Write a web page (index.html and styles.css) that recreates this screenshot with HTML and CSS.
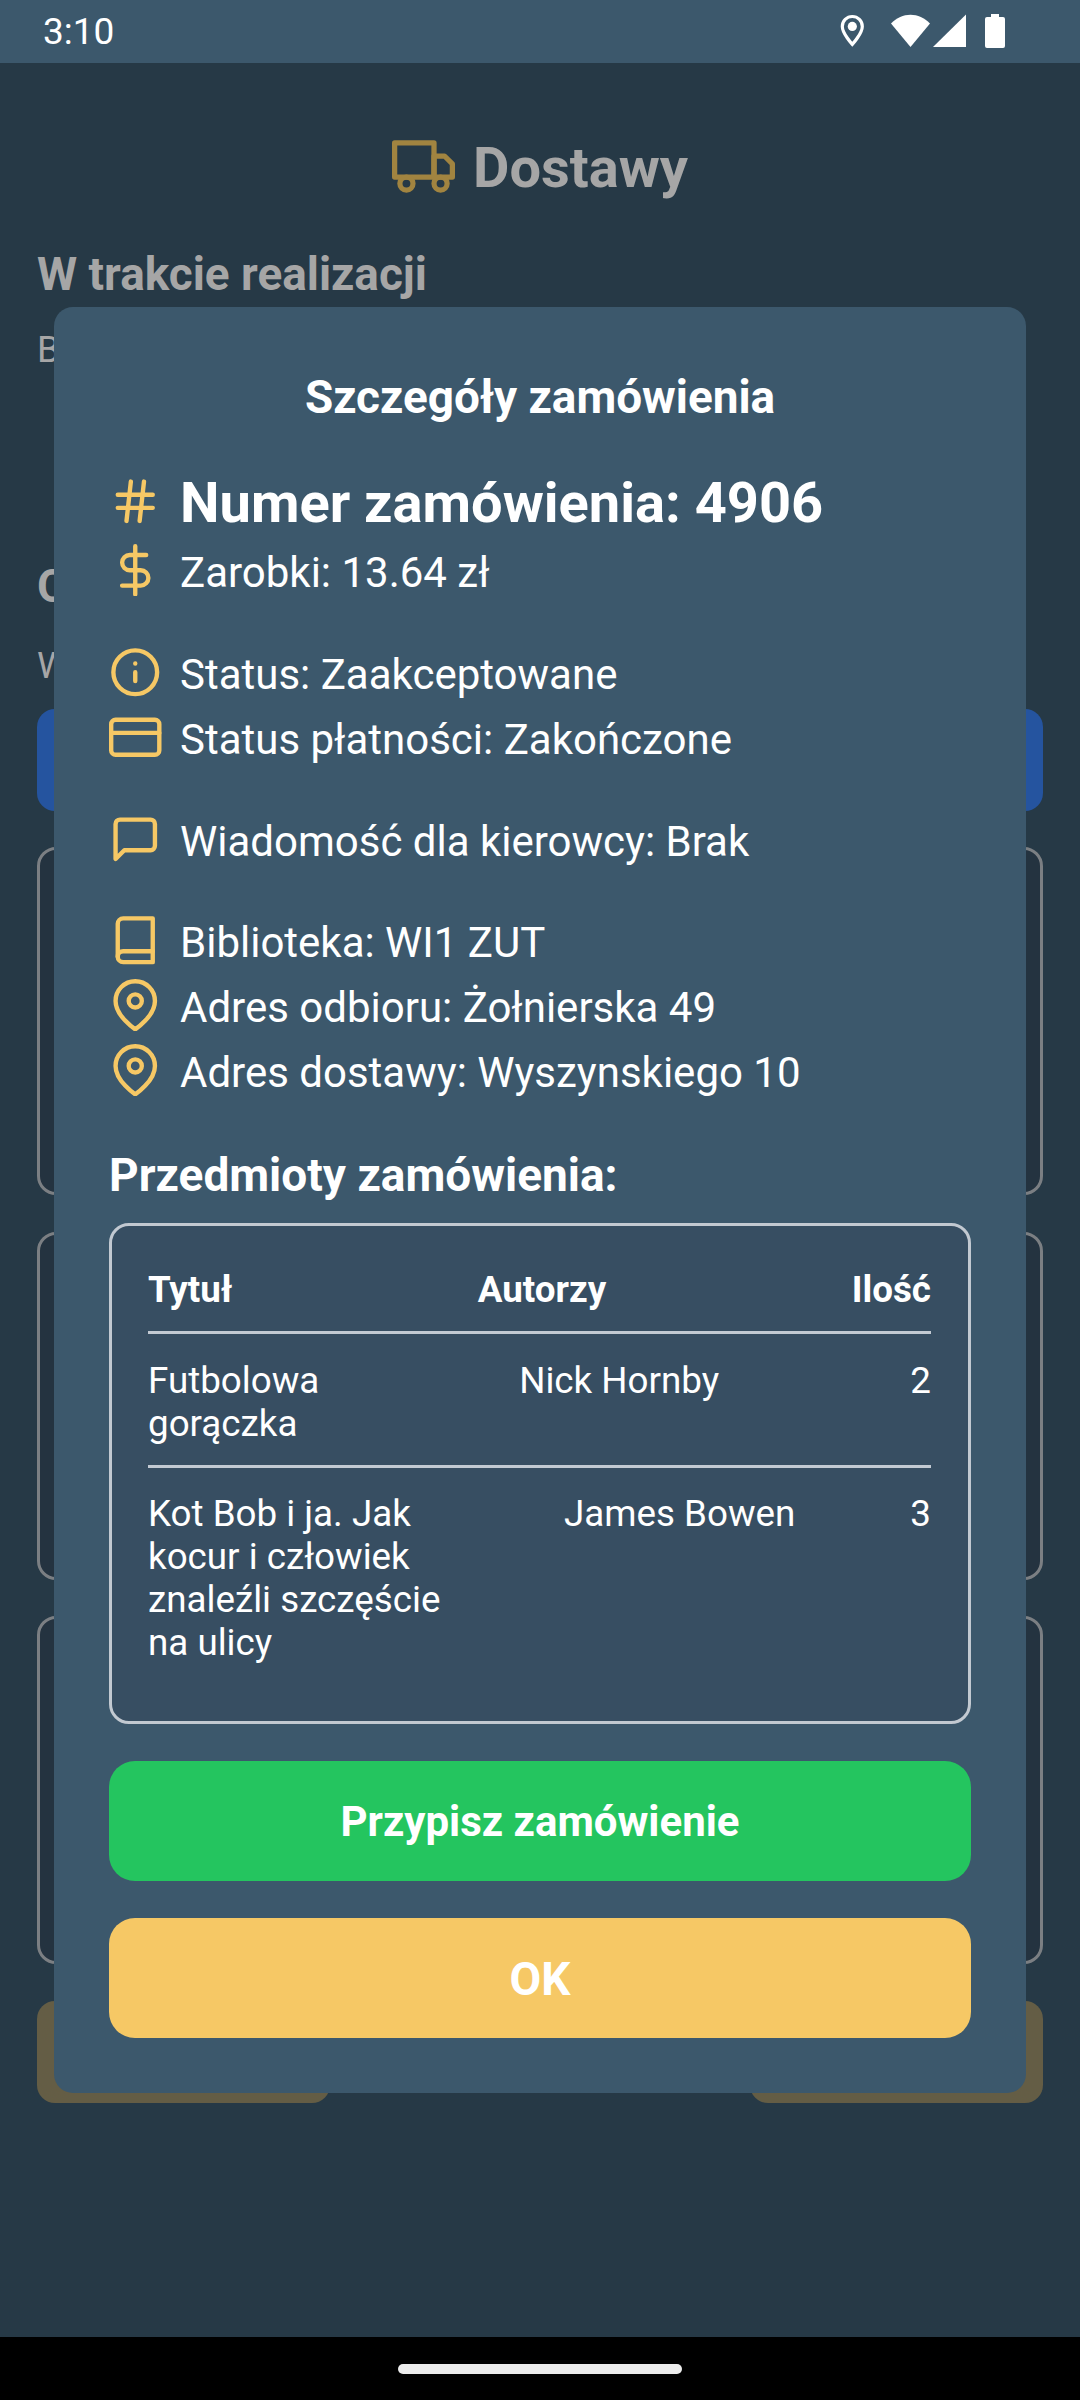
FILE: index.html
```html
<!DOCTYPE html>
<html lang="pl">
<head>
<meta charset="utf-8">
<title>Dostawy</title>
<link rel="stylesheet" href="styles.css">
</head>
<body>
<svg class="sprite" aria-hidden="true">
  <symbol id="pin" viewBox="0 0 24 24"><path d="M21 10c0 7-9 13-9 13s-9-6-9-13a9 9 0 0 1 18 0z"/><circle cx="12" cy="10" r="3"/></symbol>
</svg>
<div class="phone">
  <header class="status-bar">
    <span class="clock">3:10</span>
    <svg class="status-icons" viewBox="0 0 172 40">
      <path d="M16.3 3.500c-5.600 0-10 4.400-10 9.900 0 7 10 18 10 18s10-11 10-18c0-5.500-4.400-9.900-10-9.900z" fill="none" stroke="#fff" stroke-width="3.200"/>
      <circle cx="16.300" cy="13.400" r="4.600"/>
      <path d="M55 10.500C66-1.300 83-1.300 94 10.500L74.500 34z"/>
      <path d="M130 1.500V34H97z"/>
      <path d="M155 1h8v3h4a2 2 0 0 1 2 2v27a2 2 0 0 1-2 2h-16a2 2 0 0 1-2-2V6a2 2 0 0 1 2-2h4z"/>
    </svg>
  </header>

  <main class="screen">
    <div class="page-title">
      <svg class="truck" viewBox="0 0 24 24"><rect x="1" y="3" width="15" height="13"/><path d="M16 8h4l3 3v5h-7z"/><circle cx="5.500" cy="18.500" r="2.500"/><circle cx="18.500" cy="18.500" r="2.500"/></svg>
      <h1>Dostawy</h1>
    </div>
    <h2>W trakcie realizacji</h2>
    <p class="note note-empty">Brak</p>
    <h2>Oczekujące</h2>
    <p class="note">Wybierz</p>
    <div class="range"></div>
    <div class="orders">
      <div class="order"></div>
      <div class="order"></div>
      <div class="order"></div>
    </div>
    <div class="pager"><div class="pager-button"></div><div class="pager-button"></div></div>
  </main>

  <section class="modal">
    <h2 class="modal-title">Szczegóły zamówienia</h2>
    <div class="row row-number"><svg class="icon" viewBox="0 0 24 24"><path d="M4 9h16M4 15h16M10 3 8 21M16 3l-2 18"/></svg><strong>Numer zamówienia: 4906</strong></div>
    <div class="row"><svg class="icon" viewBox="0 0 24 24"><path d="M12 1v22M17 5H9.500a3.500 3.500 0 0 0 0 7h5a3.500 3.500 0 0 1 0 7H6"/></svg><span>Zarobki: 13.64 zł</span></div>

    <div class="group">
      <div class="row"><svg class="icon" viewBox="0 0 24 24"><circle cx="12" cy="12" r="10"/><path d="M12 16v-4M12 8h.01"/></svg><span>Status: Zaakceptowane</span></div>
      <div class="row"><svg class="icon" viewBox="0 0 24 24"><rect x="1" y="4" width="22" height="16" rx="2"/><path d="M1 10h22"/></svg><span>Status płatności: Zakończone</span></div>
    </div>
    <div class="group">
      <div class="row"><svg class="icon" viewBox="0 0 24 24"><path d="M21 15a2 2 0 0 1-2 2H7l-4 4V5a2 2 0 0 1 2-2h14a2 2 0 0 1 2 2z"/></svg><span>Wiadomość dla kierowcy: Brak</span></div>
    </div>
    <div class="group group-addresses">
      <div class="row"><svg class="icon" viewBox="0 0 24 24"><path d="M4 19.500A2.500 2.500 0 0 1 6.500 17H20"/><path d="M6.500 2H20v20H6.500A2.500 2.500 0 0 1 4 19.500v-15A2.500 2.500 0 0 1 6.500 2z"/></svg><span>Biblioteka: WI1 ZUT</span></div>
      <div class="row"><svg class="icon"><use href="#pin"/></svg><span>Adres odbioru: Żołnierska 49</span></div>
      <div class="row"><svg class="icon"><use href="#pin"/></svg><span>Adres dostawy: Wyszynskiego 10</span></div>
    </div>

    <h3 class="items-title">Przedmioty zamówienia:</h3>
    <div class="items">
      <div class="items-head"><span>Tytuł</span><span>Autorzy</span><span>Ilość</span></div>
      <div class="item"><span class="book book-short">Futbolowa gorączka</span><span>Nick Hornby</span><span>2</span></div>
      <div class="item"><span class="book">Kot Bob i ja. Jak kocur i człowiek znaleźli szczęście na ulicy</span><span>James Bowen</span><span>3</span></div>
    </div>
    <button class="button button-assign">Przypisz zamówienie</button>
    <button class="button button-ok">OK</button>
  </section>

  <footer class="nav-bar"><span class="handle"></span></footer>
</div>
</body>
</html>
```
FILE: styles.css
```css
* { box-sizing: border-box; margin: 0; padding: 0; }

body { background: #263946; font-family: Roboto, sans-serif; }

.sprite { position: absolute; width: 0; height: 0; }

.phone {
  position: relative;
  display: flex;
  flex-direction: column;
  width: 1080px;
  height: 2400px;
  overflow: hidden;
}

.status-bar {
  display: flex;
  justify-content: space-between;
  align-items: center;
  height: 63px;
  padding: 0 72px 0 43px;
  background: #3c586c;
  color: #fff;
}
.clock { font-size: 37px; line-height: 62px; }
.status-icons { width: 172px; height: 40px; margin-top: 3px; fill: #fff; }

.screen {
  flex: 1;
  padding: 70px 37px 0;
  color: #a6a6a6;
}
.page-title {
  display: flex;
  justify-content: center;
  align-items: center;
  gap: 18px;
  height: 70px;
  margin-bottom: 41px;
}
.page-title h1 { font-size: 56px; line-height: 70px; }
.truck {
  width: 63px;
  height: 63px;
  margin-bottom: 3px;
  fill: none;
  stroke: #a18440;
  stroke-width: 2;
  stroke-linejoin: round;
}
.screen h2 { font-size: 45.9px; line-height: 60px; }
.note { margin-top: 28px; font-size: 36.75px; line-height: 44px; }
.note-empty { margin-top: 24px; margin-bottom: 184px; }

.range { height: 102px; margin-top: 21px; border-radius: 18px; background: #25549f; }
.orders { display: flex; flex-direction: column; gap: 36.5px; margin-top: 36px; }
.order {
  height: 348px;
  border: 3px solid #7b7f83;
  border-radius: 19px;
  background: #243340;
}
.pager { display: flex; justify-content: space-between; margin-top: 37px; }
.pager-button { width: 293px; height: 102px; border-radius: 18px; background: #645d45; }

.nav-bar {
  display: flex;
  justify-content: center;
  height: 63px;
  padding-top: 27px;
  background: #000;
}
.handle { width: 284px; height: 10px; border-radius: 5px; background: #ececec; }

.modal {
  position: absolute;
  top: 307px;
  left: 54px;
  width: 972px;
  height: 1786px;
  padding: 55px;
  border-radius: 19px;
  background: #3c586c;
  color: #fff;
}
.modal-title { margin-bottom: 37px; font-size: 45.9px; line-height: 70px; text-align: center; }

.row { display: flex; align-items: center; gap: 18.5px; height: 65px; font-size: 42px; white-space: nowrap; }
.row-number { height: 69px; margin-bottom: 2px; font-size: 56px; }
.row-number strong { margin-bottom: 2px; }
.group { margin-top: 37px; }
.group-addresses { margin-top: 36px; }
.icon {
  flex: none;
  width: 52.5px;
  height: 52.5px;
  margin-bottom: 5.5px;
  fill: none;
  stroke: #f6c865;
  stroke-width: 2;
  stroke-linecap: round;
  stroke-linejoin: round;
}

.items-title { margin: 39px 0 16px; font-size: 46px; line-height: 63px; }
.items {
  height: 501px;
  padding: 36px 37px 36px 36px;
  border: 3px solid #c2c9d1;
  border-radius: 20px;
  background: #374e62;
  font-size: 36.75px;
  line-height: 43px;
}
.items-head {
  display: flex;
  justify-content: space-between;
  padding-bottom: 13px;
  border-bottom: 3px solid #c3cad3;
  font-weight: 700;
  line-height: 56px;
}
.item { display: flex; justify-content: space-between; padding: 24.5px 0 20px; border-bottom: 3px solid #c3cad3; }
.item:last-child { border-bottom: 0; }
.book { width: 301px; }
.book-short { width: 180px; }

.button {
  display: block;
  width: 100%;
  height: 120px;
  margin-top: 37px;
  padding-top: 2px;
  border: 0;
  border-radius: 26px;
  color: #fff;
  font: 700 42px/118px Roboto, sans-serif;
}
.button-assign { background: #24c55f; }
.button-ok { background: #f6c865; font-size: 46px; }
```
